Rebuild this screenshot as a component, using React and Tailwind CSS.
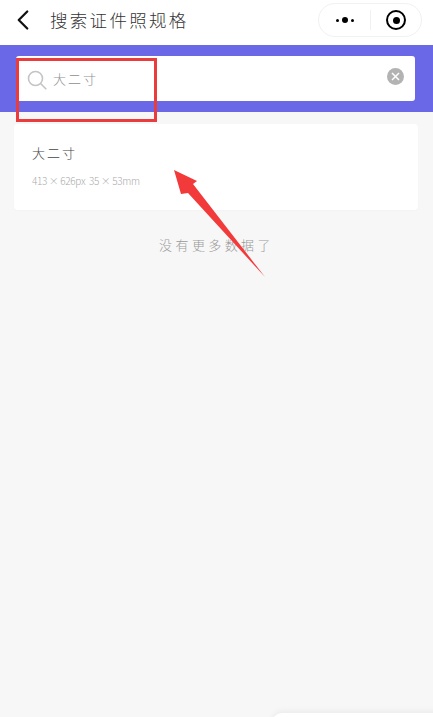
import React from 'react'
import { ChevronLeft } from 'lucide-react'

const cjk = "font-['Noto_Sans_CJK_SC','Noto_Sans',sans-serif]"

export default function App() {
  return (
    <div className={`relative h-[717px] w-[433px] overflow-hidden bg-[#f7f7f7] ${cjk}`}>
      {/* title bar */}
      <div className="flex h-[45px] items-center bg-white pb-[5px]">
        <ChevronLeft className="ml-[6px] h-[34px] w-[34px] text-[#111]" strokeWidth={1.6} />
        <div className="ml-[10px] text-[17.5px] leading-none font-light tracking-[2.3px] text-[#333]">搜索证件照规格</div>
        <div className="mr-[11px] ml-auto flex h-[34px] w-[104px] items-center rounded-full border border-[#f1f1f1] bg-white">
          <div className="flex w-[51px] items-center justify-center gap-[3px]">
            <span className="h-[3px] w-[3px] rounded-full bg-black" />
            <span className="h-[6px] w-[6px] rounded-full bg-black" />
            <span className="h-[3px] w-[3px] rounded-full bg-black" />
          </div>
          <div className="h-[20px] w-px bg-[#f1f1f1]" />
          <div className="flex flex-1 items-center justify-center">
            <div className="flex h-[20px] w-[20px] items-center justify-center rounded-full border-[2.5px] border-black">
              <span className="h-[7px] w-[7px] rounded-full bg-black" />
            </div>
          </div>
        </div>
      </div>

      {/* search */}
      <div className="h-[67px] bg-[#6a68e6] px-[16px] pt-[11px] pr-[18px]">
        <div className="flex h-[45px] items-center rounded-[3px] bg-white pr-[11px] pl-[11px]">
          <svg className="mt-[3px]" width="20" height="20" viewBox="0 0 20 20" fill="none" stroke="#c4c4c4" strokeWidth="1.6">
            <circle cx="8.5" cy="8.5" r="7" />
            <path d="M13.8 13.8l5 5" strokeLinecap="round" />
          </svg>
          <span className="ml-[6px] text-[13px] leading-none font-light tracking-[2px] text-[#8f8f8f]">大二寸</span>
          <div className="mb-[4px] ml-auto flex h-[17px] w-[17px] items-center justify-center rounded-full bg-[#b3b3b3]">
            <svg width="9" height="9" viewBox="0 0 9 9" stroke="#fff" strokeWidth="1.5">
              <path d="M1 1l7 7M8 1l-7 7" />
            </svg>
          </div>
        </div>
      </div>

      {/* result */}
      <div className="mx-[14px] mt-[12px] mr-[15px] h-[86px] rounded-[4px] bg-white pt-[20px] pl-[18px] shadow-[0_1px_2px_rgba(0,0,0,0.02)]">
        <div className="text-[13px] leading-[18px] font-light tracking-[2px] text-[#444]">大二寸</div>
        <div className="mt-[13px] text-[10px] leading-[12px] font-light tracking-[-0.35px] text-[#aaa]">413 × 626px&nbsp;&nbsp;35 × 53mm</div>
      </div>

      <div className="mt-[26px] text-center text-[13px] leading-[18px] font-light tracking-[3.4px] text-[#999]">没有更多数据了</div>

      {/* annotation overlays */}
      <div className="absolute top-[58px] left-[16px] h-[64px] w-[141px] border-[3px] border-[#ea3b3d]" />
      <svg className="absolute top-0 left-0" width="433" height="717" fill="#f23a3a">
        <polygon points="174,170 197,181 193,184 265,277 188,193 181,194" />
      </svg>

      {/* sheet peeking at bottom */}
      <div className="absolute top-[713px] left-[272px] h-[20px] w-[170px] rounded-tl-[10px] bg-white shadow-[0_-2px_6px_rgba(0,0,0,0.05)]" />
    </div>
  )
}
